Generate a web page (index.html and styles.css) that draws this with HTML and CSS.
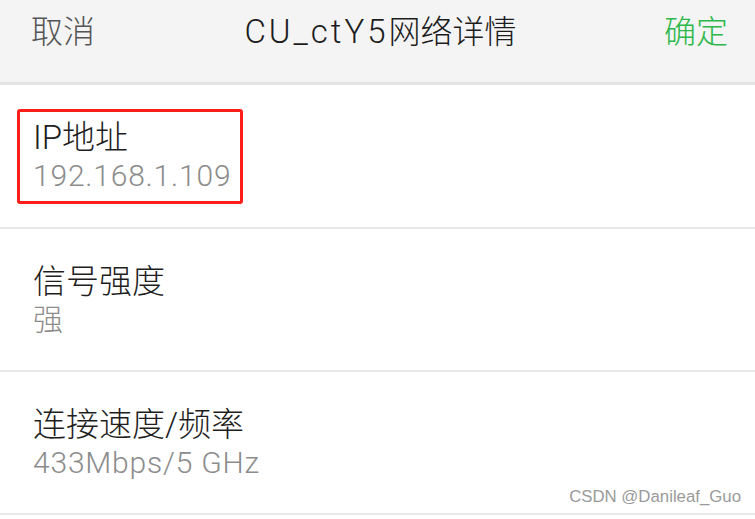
FILE: index.html
```html
<!DOCTYPE html>
<html lang="zh-CN">
<head>
<meta charset="utf-8">
<title>CU_ctY5网络详情</title>
<link rel="stylesheet" href="styles.css">
</head>
<body>
<div class="screen">
  <header class="topbar">
    <span class="cancel">取消</span>
    <span class="title"><span class="latin">CU_ctY5</span>网络详情</span>
    <span class="ok">确定</span>
  </header>
  <section class="list">
    <div class="row">
      <div class="info highlight">
        <div class="label">IP地址</div>
        <div class="value">192.168.1.109</div>
      </div>
    </div>
    <div class="row">
      <div class="info">
        <div class="label">信号强度</div>
        <div class="value">强</div>
      </div>
    </div>
    <div class="row">
      <div class="info">
        <div class="label">连接速度/频率</div>
        <div class="value">433Mbps/5 GHz</div>
      </div>
    </div>
  </section>
  <div class="watermark">CSDN @Danileaf_Guo</div>
</div>
</body>
</html>
```
FILE: styles.css
```css
* { box-sizing: border-box; margin: 0; padding: 0; }
html, body { width: 755px; height: 519px; overflow: hidden; background: #fff; }
body {
  font-family: "Roboto", "Noto Sans CJK SC", sans-serif;
}
.screen {
  position: relative;
  width: 755px;
  height: 519px;
  background: #fff;
}
.topbar {
  height: 85px;
  background: #f4f4f4;
  border-bottom: 3px solid #e3e4e6;
  display: grid;
  grid-template-columns: 1fr auto 1fr;
  align-items: start;
  padding: 10px 27px 0 31px;
  font-size: 32px;
  line-height: 44px;
  font-weight: 300;
}
.cancel { color: #555; justify-self: start; }
.title { color: #1c1c1c; justify-self: center; padding-left: 2px; }
.title .latin { font-size: 33px; letter-spacing: 3px; }
.ok { color: #2db84a; justify-self: end; }

.list { display: flex; flex-direction: column; }
.row {
  height: 143px;
  border-bottom: 2px solid #e9e9e9;
  padding: 24px 0 0 17px;
}
.row:first-child { height: 144px; }
.info {
  display: inline-flex;
  flex-direction: column;
  padding: 6px 9px 7px 13px;
  border: 3px solid transparent;
  border-radius: 3px;
}
.info.highlight { border-color: #ff1f1a; }
.label {
  font-size: 33px;
  line-height: 40px;
  color: #1e1e1e;
  font-weight: 300;
}
.value {
  font-size: 30px;
  line-height: 36px;
  letter-spacing: 0.8px;
  color: #8c8c8c;
  font-weight: 300;
}
.watermark {
  position: absolute;
  right: 14px;
  top: 487px;
  font-size: 16.8px;
  color: #9a9a9a;
  font-family: "Liberation Sans", "Noto Sans CJK SC", sans-serif;
}
```
